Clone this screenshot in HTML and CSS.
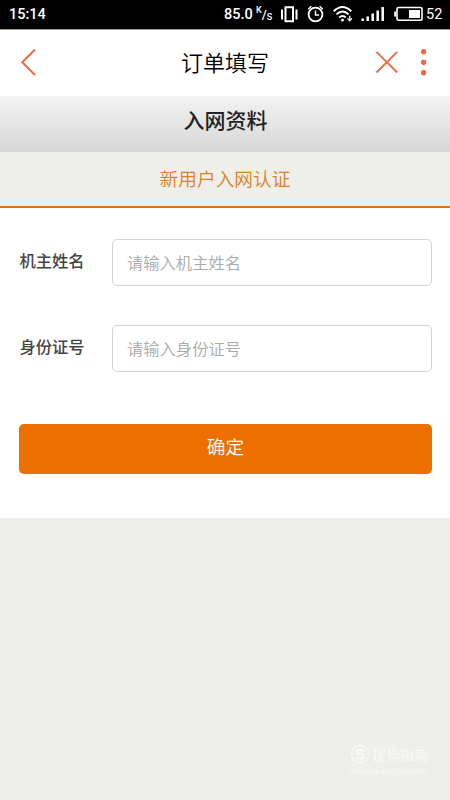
FILE: index.html
```html
<!DOCTYPE html>
<html lang="zh-CN">
<head>
<meta charset="utf-8">
<title>订单填写</title>
<link rel="stylesheet" href="styles.css">
</head>
<body>
<div class="status">
  <span class="time">15:14</span>
  <span class="speed">85.0</span>
  <span class="unit"><span class="unit-k">K</span><span class="unit-slash">/</span><span class="unit-s">S</span></span>
  <svg class="icons" width="144" height="29" viewBox="280 0 144 29" fill="none" stroke="#fff" stroke-width="1.8">
    <path d="M282 9.500v10M296.500 9.500v10M285.500 7.200h7.500v14h-7.500z" stroke-width="2"/>
    <circle cx="315.500" cy="14.500" r="6.900"/>
    <path d="M315.500 10.500v4.500h3.500M308.300 9.200l3-3M322.700 9.200l-3-3" stroke-width="1.500"/>
    <path d="M333.700 11.200q8.800-8.400 17.600 0M336.400 14.400q6.100-5.700 12.200 0M339.200 17.500q3.300-3 6.600 0" stroke-width="1.900"/>
    <circle cx="342.500" cy="20" r="1.500" fill="#fff" stroke="none"/>
    <path d="M349.700 15.800v4.500M347.500 18.400l2.200 2.400 2.200-2.400" stroke-width="1.300"/>
    <path d="M362.700 18.500v2.500M367.700 16.500V21M372.700 13.500V21M377.700 10.500V21M382.700 7V21" stroke-width="2.500"/>
    <rect x="397" y="7.500" width="25" height="12.700" rx="1.500" stroke-width="1.600"/>
    <path d="M395.200 11.500v5" stroke-width="2"/>
    <rect x="409" y="10" width="11" height="8" fill="#fff" stroke="none"/>
  </svg>
  <span class="battery">52</span>
</div>
<header class="nav">
  <svg width="62" height="66" viewBox="0 0 62 66" fill="none" stroke="#ed6a42" stroke-width="2"><path d="M35 19.500L22.300 32.300L35 45"/></svg>
  <h1>订单填写</h1>
  <svg width="80" height="66" viewBox="370 0 80 66" fill="none" stroke="#ed6a42" stroke-width="1.800"><path d="M376.500 21.800l20.700 20.700M397.200 21.800l-20.700 20.700"/><g fill="#ed6a42" stroke="none"><circle cx="423.600" cy="21.700" r="2.700"/><circle cx="423.600" cy="32.200" r="2.700"/><circle cx="423.600" cy="42.700" r="2.700"/></g></svg>
</header>
<h2 class="band">入网资料</h2>
<div class="tab">新用户入网认证</div>
<form class="form">
  <div class="row"><label for="name">机主姓名</label><input id="name" type="text" placeholder="请输入机主姓名"></div>
  <div class="row"><label for="idno">身份证号</label><input id="idno" type="text" placeholder="请输入身份证号"></div>
  <button class="submit" type="button">确定</button>
</form>
<div class="watermark">
  <div class="mark-row">
    <svg width="20" height="20" viewBox="0 0 20 20" fill="none" stroke="#f8f8f4"><circle cx="10" cy="10" r="8.700" stroke-width="1.200"/><path d="M13.700 7.200Q12.800 5.400 10 5.400Q6.700 5.400 6.700 7.700Q6.700 9.500 10 10Q13.600 10.500 13.600 12.500Q13.600 14.800 10 14.800Q7 14.800 6.200 12.900" stroke-width="2"/></svg>
    <span>搜狗指南</span>
  </div>
  <div class="mark-url">zhinan.sogou.com</div>
</div>
</body>
</html>
```
FILE: styles.css
```css
* { box-sizing: border-box; }
body {
  margin: 0;
  height: 800px;
  overflow: hidden;
  display: flex;
  flex-direction: column;
  background: #eeeeea;
  font-family: "Noto Sans CJK SC", sans-serif;
}
.status {
  height: 29px;
  flex: none;
  display: flex;
  align-items: center;
  background: #000;
  color: #fff;
  font: 500 14.500px/29px Roboto, sans-serif;
}
.time { width: 215px; padding-left: 9px; }
.speed { width: 41px; padding-left: 9px; font-size: 14.500px; }
.unit { width: 24px; height: 29px; display: flex; font-size: 9px; }
.unit-k { line-height: 21px; }
.unit-slash { font-size: 13px; line-height: 29px; }
.unit-s { line-height: 34px; }
.icons { flex: none; }
.battery { padding-left: 2px; font-weight: 400; }
.nav {
  height: 67px;
  flex: none;
  display: flex;
  justify-content: space-between;
  background: #fff;
  border-top: 1px solid #999;
}
.nav h1 {
  margin: 0 0 0 18px;
  font-size: 22px;
  line-height: 62px;
  font-weight: 350;
  color: #000;
}
.band {
  height: 56px;
  flex: none;
  margin: 0;
  padding-left: 1px;
  background: linear-gradient(#f3f3f3, #d6d6d6);
  color: #222;
  text-align: center;
  font-size: 21px;
  line-height: 46px;
  font-weight: 500;
}
.tab {
  height: 56px;
  flex: none;
  border-bottom: 2.500px solid #e1711d;
  color: #dd7f22;
  text-align: center;
  font-size: 18.700px;
  line-height: 51px;
  font-weight: 350;
}
.form {
  height: 310px;
  flex: none;
  display: flex;
  flex-direction: column;
  padding: 31px 18px 0 19px;
  background: #fff;
}
.row { display: flex; height: 47px; margin-bottom: 39px; }
.row label {
  width: 93px;
  padding-left: .5px;
  font-size: 16.300px;
  line-height: 43px;
  font-weight: 500;
  color: #444;
}
.row input {
  flex: 1;
  min-width: 0;
  padding: 0 14px 2px;
  border: 1.500px solid #d4d4d4;
  border-radius: 5px;
  background: #fff;
  font: 350 16.300px "Noto Sans CJK SC", sans-serif;
}
.row input::placeholder { color: #aaa; opacity: 1; }
.submit {
  height: 50px;
  margin-top: 13px;
  padding: 0 0 8px;
  border: 0;
  border-radius: 5px;
  background: #ec6f00;
  color: #fff;
  font: 350 18.700px "Noto Sans CJK SC", sans-serif;
}
.watermark {
  width: 80px;
  margin: 225px 0 0 350px;
  color: #f8f8f4;
}
.mark-row { display: flex; align-items: center; gap: 2px; height: 21px; font-size: 14px; line-height: 20px; white-space: nowrap; }
.mark-url { font: 9.500px/14px "Liberation Sans", sans-serif; }
```
